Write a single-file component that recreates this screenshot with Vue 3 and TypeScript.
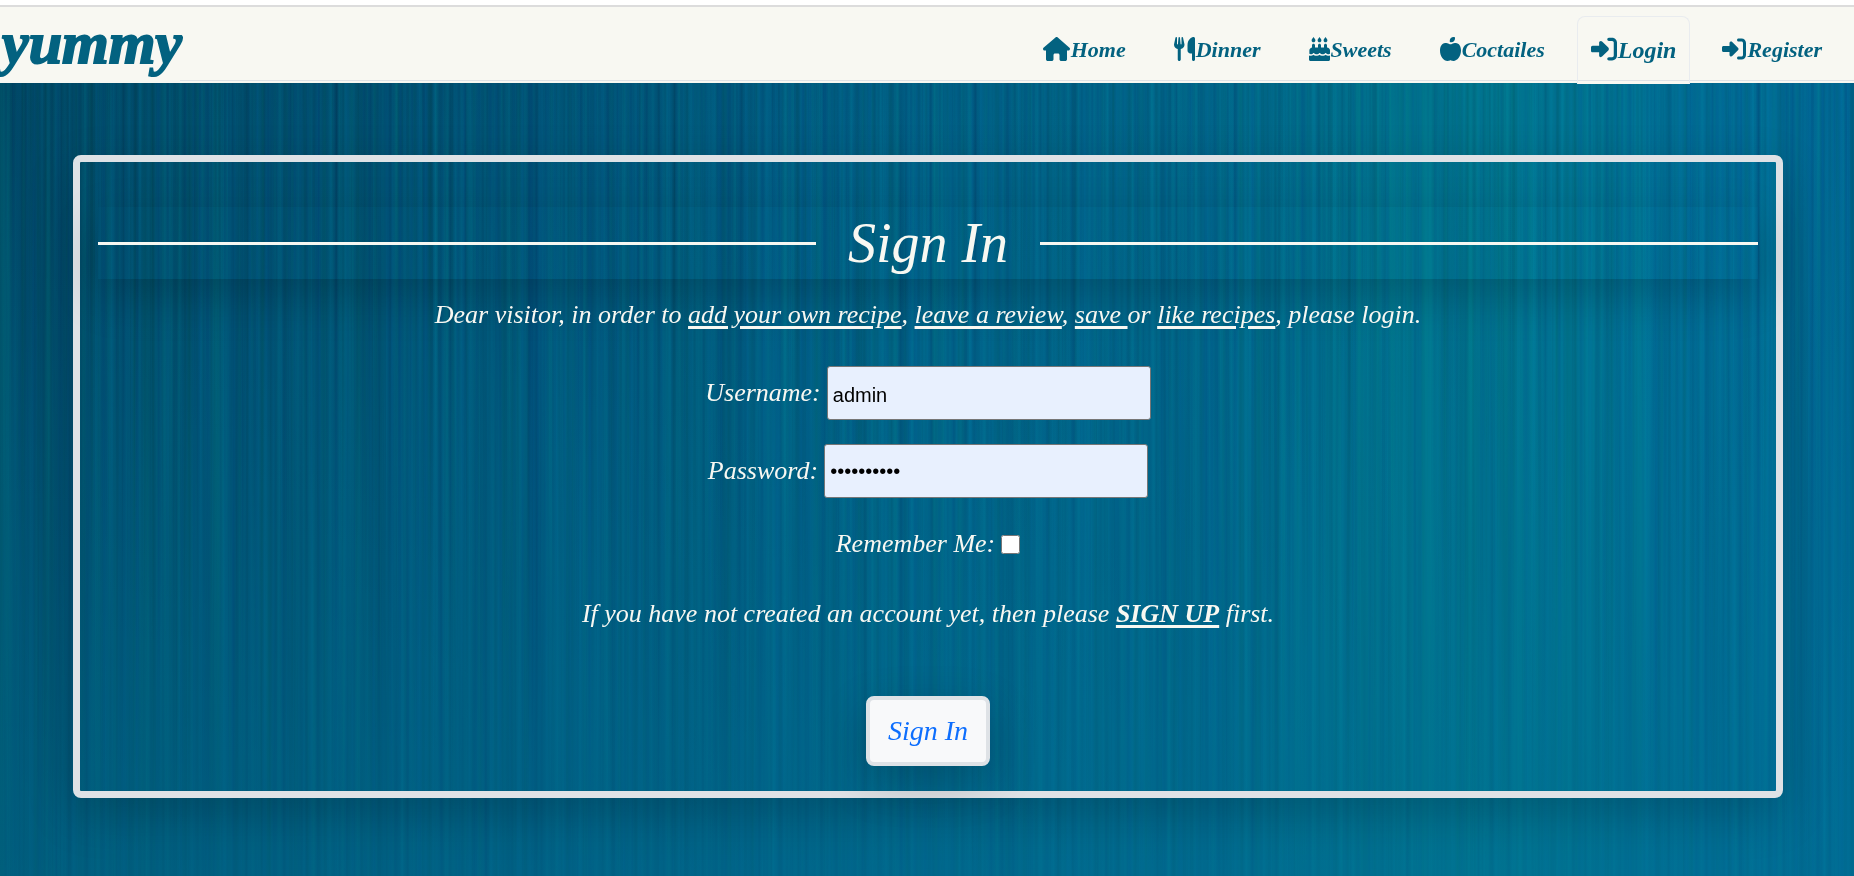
<script setup lang="ts">
import { ref } from 'vue'

interface NavItem {
  label: string
  href: string
  viewBox: string
  path: string
  active?: boolean
}

const enterIcon =
  'M217.9 105.9L340.7 228.7c7.2 7.2 11.3 17.1 11.3 27.3s-4.1 20.1-11.3 27.3L217.9 406.1c-6.4 6.4-15 9.9-24 9.9c-18.7 0-33.9-15.2-33.9-33.9l0-62.1L32 320c-17.7 0-32-14.3-32-32l0-64c0-17.7 14.3-32 32-32l128 0 0-62.1c0-18.7 15.2-33.9 33.9-33.9c9 0 17.6 3.6 24 9.9zM352 416l64 0c17.7 0 32-14.3 32-32l0-256c0-17.7-14.3-32-32-32l-64 0c-17.7 0-32-14.3-32-32s14.3-32 32-32l64 0c53 0 96 43 96 96l0 256c0 53-43 96-96 96l-64 0c-17.7 0-32-14.3-32-32s14.3-32 32-32z'

const navItems: NavItem[] = [
  {
    label: 'Home',
    href: '#home',
    viewBox: '0 0 576 512',
    path: 'M575.8 255.5c0 18-15 32.1-32 32.1h-32l.7 160.2c0 2.7-.2 5.4-.5 8.1V472c0 22.1-17.9 40-40 40H456c-1.1 0-2.2 0-3.3-.1c-1.4 .1-2.8 .1-4.2 .1H416 392c-22.1 0-40-17.9-40-40V448 384c0-17.7-14.3-32-32-32H256c-17.7 0-32 14.3-32 32v64 24c0 22.1-17.9 40-40 40H160 128.1c-1.5 0-3-.1-4.5-.2c-1.2 .1-2.4 .2-3.6 .2H104c-22.1 0-40-17.9-40-40V360c0-.9 0-1.9 .1-2.8V287.6H32c-18 0-32-14-32-32.1c0-9 3-17 10-24L266.4 8c7-7 15-8 22-8s15 2 21 7L564.8 231.5c8 7 12 15 11 24z',
  },
  {
    label: 'Dinner',
    href: '#dinner',
    viewBox: '0 0 448 512',
    path: 'M416 0C400 0 288 32 288 176V288c0 35.3 28.7 64 64 64h32V480c0 17.7 14.3 32 32 32s32-14.3 32-32V352 240 32c0-17.7-14.3-32-32-32zM64 16C64 7.8 57.9 1 49.7 .1S34.2 4.6 32.4 12.5L2.1 148.8C.7 155.1 0 161.5 0 167.9c0 45.9 35.1 83.6 80 87.7V480c0 17.7 14.3 32 32 32s32-14.3 32-32V255.6c44.9-4.1 80-41.8 80-87.7c0-6.4-.7-12.8-2.1-19.1L191.6 12.5c-1.8-8-9.3-13.3-17.4-12.4S160 7.8 160 16V150.2c0 5.4-4.4 9.8-9.8 9.8c-5.1 0-9.3-3.9-9.8-9L127.9 14.6C127.2 6.3 120.3 0 112 0s-15.2 6.3-15.9 14.6L83.7 151c-.5 5.1-4.7 9-9.8 9c-5.4 0-9.8-4.4-9.8-9.8V16z',
  },
  {
    label: 'Sweets',
    href: '#sweets',
    viewBox: '0 0 448 512',
    path: 'M96 0L62 47C58 54 56 62 56 72c0 22 18 40 40 40s40-18 40-40c0-10-2-18-6-25zM224 0L190 47c-4 7-6 15-6 25c0 22 18 40 40 40s40-18 40-40c0-10-2-18-6-25zM352 0L318 47c-4 7-6 15-6 25c0 22 18 40 40 40s40-18 40-40c0-10-2-18-6-25zM64 224V176c0-18 14-32 32-32s32 14 32 32v48h64V176c0-18 14-32 32-32s32 14 32 32v48h64V176c0-18 14-32 32-32s32 14 32 32v48c35 0 64 29 64 64v71c-9 5-18 9-29 9c-24 0-40-12-53-23c-7-6-14-6-21 0c-13 11-30 23-53 23s-42-12-53-23c-8-6-16-6-22 0c-13 11-30 23-53 23s-41-12-54-23c-7-6-14-6-21 0c-13 11-29 23-53 23c-11 0-20-4-28-9V288c0-35 29-64 64-64zM0 480v-86c9 4 18 6 28 6c27 0 48-12 64-24c16 12 39 24 66 24s50-12 66-24c16 12 39 24 66 24s50-12 66-24c16 12 37 24 64 24c10 0 19-2 28-6v86c0 18-14 32-32 32H32c-18 0-32-14-32-32z',
  },
  {
    label: 'Coctailes',
    href: '#coctailes',
    viewBox: '0 0 448 512',
    path: 'M224 112c-8.8 0-16-7.2-16-16V80c0-44.2 35.8-80 80-80h16c8.8 0 16 7.2 16 16V32c0 44.2-35.8 80-80 80H224zM0 288c0-76.3 35.7-160 112-160c27.3 0 59.7 10.3 82.7 19.3c18.8 7.3 39.9 7.3 58.7 0c22.9-8.9 55.4-19.3 82.7-19.3c76.3 0 112 83.7 112 160c0 128-80 224-160 224c-16.5 0-38.1-6.6-51.5-11.3c-8.1-2.8-16.9-2.8-25 0c-13.4 4.7-35 11.3-51.5 11.3C80 512 0 416 0 288z',
  },
  { label: 'Login', href: '#login', viewBox: '0 0 512 512', path: enterIcon, active: true },
  { label: 'Register', href: '#register', viewBox: '0 0 512 512', path: enterIcon },
]

const username = ref<string>('admin')
const password = ref<string>('recipes123')
const remember = ref<boolean>(false)
</script>

<template>
  <div class="page">
    <svg class="texture" aria-hidden="true">
      <filter id="fine-streaks" x="0" y="0" width="100%" height="100%" color-interpolation-filters="sRGB">
        <feTurbulence type="fractalNoise" baseFrequency="0.18 0.001" numOctaves="4" seed="8" />
        <feColorMatrix values="0 0 0 0 0.5  0.8 0.5 0 0 -0.15  0.8 0 0.5 0 -0.15  0 0 0 0 1" />
      </filter>
      <rect width="100%" height="100%" filter="url(#fine-streaks)" />
    </svg>

    <header class="header">
      <a class="logo" href="#home">yummy</a>
      <nav class="nav">
        <a
          v-for="item in navItems"
          :key="item.label"
          class="tab"
          :class="{ active: item.active }"
          :href="item.href"
        >
          <svg class="icon" :viewBox="item.viewBox" aria-hidden="true"><path :d="item.path" /></svg>
          <span>{{ item.label }}</span>
        </a>
      </nav>
    </header>

    <main class="card">
      <h1 class="title">Sign In</h1>
      <p class="intro">
        Dear visitor, in order to <u>add your own recipe</u>, <u>leave a review</u>, <u>save </u>or
        <u>like recipes</u>, please login.
      </p>
      <form class="form" @submit.prevent>
        <div class="field">
          <label for="username">Username:</label>
          <input id="username" v-model="username" class="box" type="text" />
        </div>
        <div class="field">
          <label for="password">Password:</label>
          <input id="password" v-model="password" class="box" type="password" />
        </div>
        <div class="field check">
          <label for="remember">Remember Me:</label>
          <input id="remember" v-model="remember" class="tick" type="checkbox" />
        </div>
        <p class="signup">
          If you have not created an account yet, then please
          <a href="#register">SIGN UP</a> first.
        </p>
        <button class="submit" type="submit">Sign In</button>
      </form>
    </main>
  </div>
</template>

<style>
body {
  margin: 0;
}
</style>

<style scoped>
.page {
  position: relative;
  box-sizing: border-box;
  min-height: 100vh;
  padding-bottom: 78px;
  overflow: hidden;
  isolation: isolate;
  color: #f8f8f2;
  font-family: 'Liberation Serif', 'Times New Roman', serif;
  font-style: italic;
  background:
    linear-gradient(180deg, transparent 10%, rgba(0, 112, 148, 0.5) 100%),
    linear-gradient(90deg, #004a66 0%, #005072 25%, #005b80 45%, #006487 65%, #00748c 80%, #006a92 92%, #006590 100%);
}

.texture {
  position: absolute;
  inset: 0;
  z-index: -1;
  width: 100%;
  height: 100%;
  mix-blend-mode: soft-light;
  opacity: 0.35;
  mask-image: linear-gradient(180deg, #000000 20%, rgba(0, 0, 0, 0.4) 100%);
}

.header {
  display: flex;
  box-sizing: border-box;
  height: 83px;
  border-top: 5px solid #ffffff;
  background: #f8f8f2;
  box-shadow: inset 0 2px #dcdcdc;
}

.logo {
  box-sizing: border-box;
  width: 180px;
  padding-left: 2px;
  color: #036280;
  font-size: 60px;
  font-weight: 700;
  line-height: 76px;
  text-decoration: none;
  -webkit-text-stroke: 2px #036280;
}

.nav {
  display: flex;
  flex: 1;
  justify-content: flex-end;
  align-items: flex-start;
  gap: 16px;
  height: 75px;
  padding: 0 16px 0 0;
  border-bottom: 1px solid #dee2e6;
}

.tab {
  display: flex;
  align-items: center;
  gap: 1px;
  box-sizing: border-box;
  height: 68px;
  margin-top: 11px;
  padding: 0 15px;
  border: 1px solid transparent;
  color: #036280;
  font-size: 22px;
  font-weight: 700;
  line-height: 28px;
  text-decoration: none;
}

.tab.active {
  padding: 0 13px;
  border-color: #e9ecef #e9ecef #f8f8f2;
  border-radius: 8px 8px 0 0;
  font-size: 24px;
}

.icon {
  height: 24px;
  margin-bottom: 2px;
  fill: currentColor;
}

.active .icon {
  height: 26px;
}

.card {
  display: flex;
  flex-direction: column;
  box-sizing: border-box;
  margin: 72px 71px 0 73px;
  padding: 45px 18px 25px;
  border: 7px solid #dee2e6;
  border-radius: 8px;
  box-shadow: 0 16px 48px rgba(0, 0, 0, 0.2);
}

.title {
  display: flex;
  align-items: center;
  gap: 32px;
  margin: 0;
  font-size: 56px;
  font-weight: 400;
  line-height: 72px;
  box-shadow: 0 16px 48px rgba(0, 0, 0, 0.2);
}

.title::before,
.title::after {
  flex: 1;
  height: 3px;
  background: #f8f8f2;
  content: '';
}

.intro,
.signup {
  margin: 0;
  font-size: 26px;
  line-height: 44px;
  text-align: center;
}

.intro {
  margin-top: 14px;
}

.intro u,
.signup a {
  text-decoration-thickness: 3px;
  text-underline-offset: 3px;
}

.form {
  display: flex;
  flex-direction: column;
  align-items: center;
}

.field {
  display: flex;
  align-items: center;
  gap: 6px;
  margin-top: 24px;
  font-size: 26px;
  line-height: 40px;
}

.intro + .form .field:first-child {
  margin-top: 29px;
}

.box {
  box-sizing: border-box;
  width: 324px;
  height: 54px;
  padding: 4px 5px 0;
  border: 1px solid #767676;
  border-radius: 3px;
  background: #e8f0fe;
  color: #000000;
  font: 20px 'Liberation Sans', Arial, sans-serif;
}

.box[type='password'] {
  padding-top: 0;
}

.tick {
  width: 19px;
  height: 19px;
  margin: 0;
}

.field.check {
  margin-top: 26px;
}

.signup {
  margin-top: 28px;
}

.signup a {
  color: inherit;
  font-weight: 700;
}

.submit {
  box-sizing: border-box;
  height: 70px;
  margin-top: 60px;
  padding: 0 18px;
  border: 4px solid #dee2e6;
  border-radius: 8px;
  background: #f8f9fa;
  box-shadow: 0 16px 48px rgba(0, 0, 0, 0.2);
  color: #0d6efd;
  font: inherit;
  font-size: 28px;
}
</style>
